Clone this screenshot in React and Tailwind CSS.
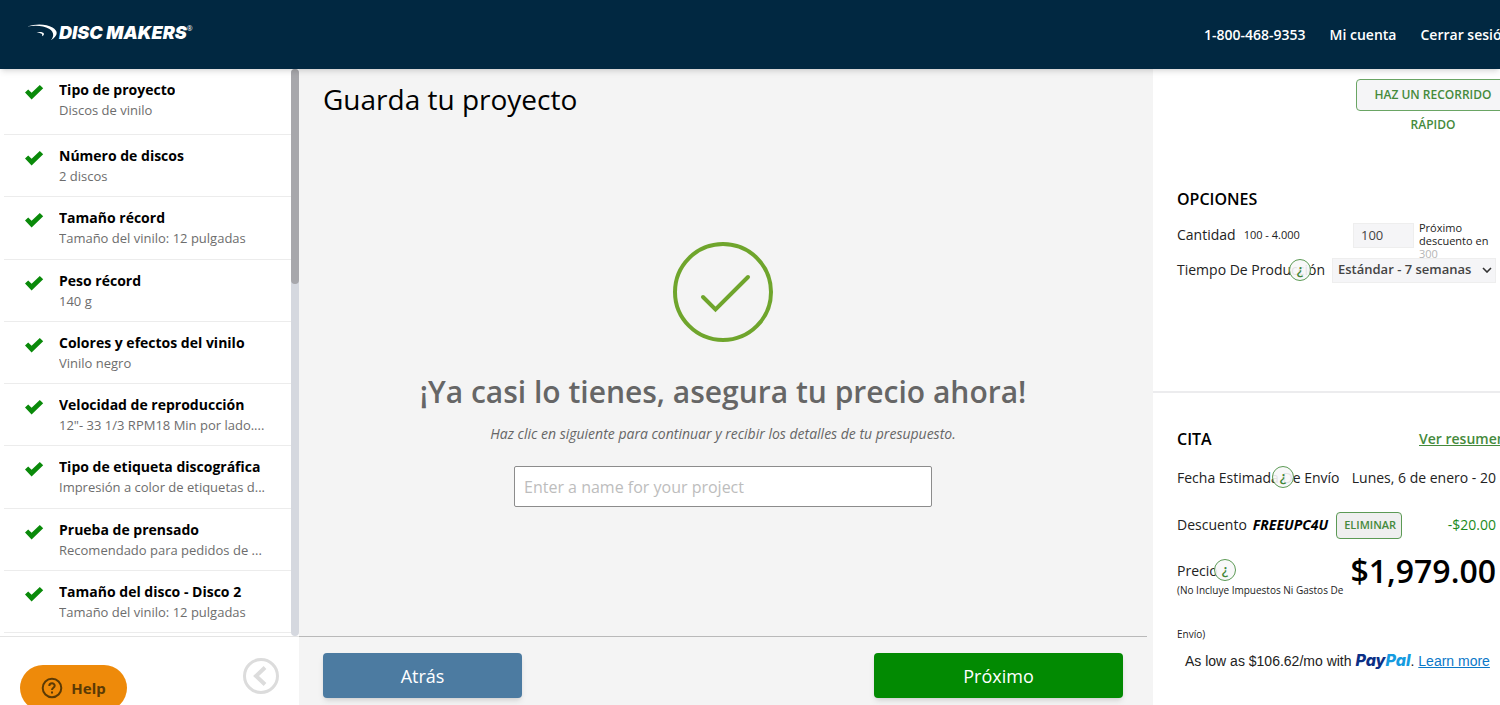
import React, { useState } from "react";

const steps = [
  { title: "Tipo de proyecto", detail: "Discos de vinilo" },
  { title: "Número de discos", detail: "2 discos" },
  { title: "Tamaño récord", detail: "Tamaño del vinilo: 12 pulgadas" },
  { title: "Peso récord", detail: "140 g" },
  { title: "Colores y efectos del vinilo", detail: "Vinilo negro" },
  { title: "Velocidad de reproducción", detail: '12"- 33 1/3 RPM18 Min por lado....' },
  { title: "Tipo de etiqueta discográfica", detail: "Impresión a color de etiquetas d..." },
  { title: "Prueba de prensado", detail: "Recomendado para pedidos de ..." },
  { title: "Tamaño del disco - Disco 2", detail: "Tamaño del vinilo: 12 pulgadas" },
];

const CheckIcon = () => (
  <svg viewBox="0 0 20 16" className="mt-1 h-4 w-5 shrink-0" aria-hidden="true">
    <path d="M1 8.6 L4.2 5.4 L7.6 8.8 L15.8 0.9 L19.2 4.3 L7.6 15.4 Z" fill="#0a8a0a" />
  </svg>
);

const Logo = () => (
  <a href="#" className="flex items-center pb-1 text-white">
    <svg viewBox="0 0 32 18" className="h-[18px] w-8" aria-hidden="true">
      <path
        d="M-1 2.8 C8 -0.6 19 -0.4 25.5 3.4 C31.5 7 31.2 11.8 23.8 16.2 C27.6 12 26.8 7.8 22 4.8 C16.6 1.6 8 1 -1 2.8 Z"
        fill="currentColor"
      />
      <path
        d="M9.5 8.4 C13 7.5 16 8 16.8 9.4 C17.2 10.4 16.6 11.4 15 12.2 C15.6 11 15.4 10.2 14.2 9.5 C13 8.8 11.6 8.5 9.5 8.4 Z"
        fill="currentColor"
      />
    </svg>
    <span className="font-['Inter'] text-[18px] leading-6 font-black italic">DISC MAKERS</span>
    <sup className="-top-1 text-[7px]">®</sup>
  </a>
);

// Round help marker that floats over the end of its label
const HelpMark = ({ className }) => (
  <button
    type="button"
    aria-label="Ayuda"
    className={`absolute flex h-[22px] w-[22px] items-center justify-center rounded-full border border-[#5c9a55] bg-[#f7f7f8]/90 text-sm leading-5 font-semibold text-[#3f8536] ${className}`}
  >
    ¿
  </button>
);

const Sidebar = () => (
  <aside className="flex w-[299px] shrink-0 flex-col bg-white">
    <div className="flex min-h-0 flex-1">
      <ul className="flex flex-1 flex-col overflow-hidden pb-[3px] pl-1">
        {steps.map((step) => (
          <li
            key={step.title}
            className="flex grow items-start gap-[15px] border-b border-[#ececec] pt-[11px] pl-5 first:pb-1"
          >
            <CheckIcon />
            <div className="min-w-0">
              <h3 className="truncate text-sm leading-5 font-bold text-black">{step.title}</h3>
              <p className="truncate text-[13px] leading-5 text-[#6d6d6d]">{step.detail}</p>
            </div>
          </li>
        ))}
      </ul>
      <div className="w-2 shrink-0 rounded-full bg-[#d5d8df]">
        <div className="h-[38%] rounded-full bg-[#a7a7ab]" />
      </div>
    </div>
    <div className="flex h-[69px] items-start justify-between border-t border-[#e4e4e4] pr-5 pl-5">
      <button
        type="button"
        className="mt-7 flex h-[46px] w-[107px] shrink-0 items-center justify-center gap-2 rounded-full bg-[#ee8a0a] font-['Noto_Sans'] text-[15px] font-bold text-[#5b3a05]"
      >
        <svg viewBox="0 0 22 22" className="h-[22px] w-[22px]" fill="none" stroke="currentColor" strokeWidth="2">
          <circle cx="11" cy="11" r="9.3" />
          <path d="M8.3 9 C8.3 5.4 13.8 5.6 13.7 8.8 C13.6 10.8 11 10.8 11 13" />
          <path d="M11 14.4 V16.4" />
        </svg>
        Help
      </button>
      <button type="button" aria-label="Contraer" className="mt-[21px]">
        <svg viewBox="0 0 36 36" className="h-9 w-9" fill="none" stroke="#dcdcdc">
          <circle cx="18" cy="18" r="16.5" strokeWidth="3" />
          <path d="M22 9.5 L13 18 L22 26.5" strokeWidth="4" />
        </svg>
      </button>
    </div>
  </aside>
);

const Main = ({ name, setName }) => (
  <main className="flex min-w-0 flex-1 flex-col bg-[#f4f4f4] pr-1.5">
    <h1 className="pt-3 pl-6 text-[28px] leading-9 text-black">Guarda tu proyecto</h1>
    <div className="flex flex-1 flex-col items-center justify-center pb-1">
      <svg viewBox="0 0 100 100" className="h-[100px] w-[100px]" fill="none" stroke="#6fa52c" strokeWidth="4">
        <circle cx="50" cy="50" r="48" />
        <path d="M30 55 L42.5 67.5 L75 35" strokeLinecap="round" />
      </svg>
      <h2 className="mt-7 text-center text-[30px] leading-[44px] font-semibold text-[#666]">
        ¡Ya casi lo tienes, asegura tu precio ahora!
      </h2>
      <p className="mt-2.5 text-center text-sm leading-5 text-[#666] italic">
        Haz clic en siguiente para continuar y recibir los detalles de tu presupuesto.
      </p>
      <input
        type="text"
        aria-label="Nombre del proyecto"
        placeholder="Enter a name for your project"
        value={name}
        onChange={(e) => setName(e.target.value)}
        className="mt-[22px] h-[41px] w-full max-w-[418px] rounded-xs border border-[#8c8c8c] bg-white px-[9px] text-base text-black placeholder-[#bdbdbd]"
      />
    </div>
    <div className="flex h-[69px] items-start justify-between border-t border-[#b9b9b9] pt-4 pr-6 pl-6">
      <button
        type="button"
        className="h-[45px] w-[199px] rounded-sm bg-[#4c7ba1] text-lg text-white shadow-md"
      >
        Atrás
      </button>
      <button
        type="button"
        className="h-[45px] w-[249px] rounded-sm bg-[#028a02] text-lg text-white shadow-md"
      >
        Próximo
      </button>
    </div>
  </main>
);

const Summary = ({ quantity, setQuantity }) => (
  <aside className="flex w-[347px] shrink-0 flex-col overflow-hidden bg-white pt-[10px] whitespace-nowrap text-[#222]">
    <section className="h-[314px] border-b-2 border-[#ececee] pl-6">
      <div className="flex h-[109px] justify-end">
        <button
          type="button"
          className="-mr-[10px] flex h-8 w-[154px] shrink-0 items-start justify-center rounded-sm border border-[#6aa564] bg-[#f5f5f7] px-3 text-center text-xs leading-[30px] font-semibold whitespace-normal text-[#458a3c]"
        >
          HAZ UN RECORRIDO RÁPIDO
        </button>
      </div>
      <h2 className="text-base leading-[22px] font-semibold text-black">OPCIONES</h2>
      <div className="mt-[7px] flex h-9 items-center">
        <label htmlFor="quantity" className="flex w-44 items-center gap-2 text-sm">
          Cantidad <span className="text-[11px]">100 - 4.000</span>
        </label>
        <input
          id="quantity"
          type="text"
          value={quantity}
          onChange={(e) => setQuantity(e.target.value)}
          className="h-[25px] w-[61px] border border-[#eee] bg-[#f5f5f7] px-[7px] text-[13px] text-[#444]"
        />
        <p className="h-7 pl-[5px] text-[11px] leading-[13px]">
          Próximo
          <br />
          descuento en
          <br />
          <span className="text-[#b5b5b5]">300</span>
        </p>
      </div>
      <div className="flex h-[34px] items-center">
        <label htmlFor="time" className="relative w-[155px] text-sm">
          Tiempo De Producción
          <HelpMark className="top-0 left-28 -mt-px" />
        </label>
        <select
          id="time"
          className="h-[25px] w-[164px] appearance-none border border-[#eee] bg-[#f5f5f7] pl-[5px] text-[13px] font-semibold text-[#444]"
        >
          <option>Estándar - 7 semanas</option>
        </select>
        <svg
          viewBox="0 0 10 6"
          className="pointer-events-none -ml-3.5 h-1.5 w-2.5"
          fill="none"
          stroke="#333"
          strokeWidth="1.6"
        >
          <path d="M1 1 L5 5 L9 1" />
        </svg>
      </div>
    </section>

    <section className="pt-[34px] pl-6">
      <div className="flex h-6 items-center">
        <h2 className="w-[242px] shrink-0 text-base leading-[22px] font-semibold text-black">CITA</h2>
        <a href="#" className="text-sm font-semibold text-[#458a3c] underline">
          Ver resumen
        </a>
      </div>
      <div className="flex h-[54px] items-center justify-between pr-1 text-sm">
        <span className="relative">
          Fecha Estimada De Envío
          <HelpMark className="top-0 left-[95px] -mt-0.5" />
        </span>
        <span>Lunes, 6 de enero - 20</span>
      </div>
      <div className="flex h-10 items-center pr-1 text-sm">
        <span>Descuento</span>
        <span className="ml-1.5 font-bold text-black italic">FREEUPC4U</span>
        <button
          type="button"
          className="ml-2 h-[27px] w-[66px] rounded-sm border border-[#5c9a55] bg-[#efefef] pl-0.5 text-[11px] font-semibold text-[#458a3c]"
        >
          ELIMINAR
        </button>
        <span className="ml-auto text-[#1c8a1c]">-$20.00</span>
      </div>
      <div className="mt-[7px] flex h-[38px] items-center justify-between pr-1">
        <span className="relative text-sm">
          Precio
          <HelpMark className="top-0 left-[37px] -mt-0.5" />
        </span>
        <span className="text-[32px] font-semibold text-black">$1,979.00</span>
      </div>
      <p className="-mt-[22px] w-44 text-[10px] leading-[44px] whitespace-normal">
        (No Incluye Impuestos Ni Gastos De Envío)
      </p>
      <p className="-mt-1.5 pl-2 font-['Liberation_Sans'] text-sm leading-[22px]">
        As low as $106.62/mo with{" "}
        <span className="font-['Inter'] text-base leading-4 font-extrabold text-[#0b2f86] italic">
          Pay<span className="text-[#159be0]">Pal</span>
        </span>
        .{" "}
        <a href="#" className="text-[#0a78c8] underline">
          Learn more
        </a>
      </p>
    </section>
  </aside>
);

const App = () => {
  const [name, setName] = useState("");
  const [quantity, setQuantity] = useState("100");

  return (
    <div className="flex h-screen flex-col overflow-hidden bg-white font-['Open_Sans',sans-serif]">
      <header className="relative z-10 flex h-[69px] shrink-0 items-center justify-between bg-[#012841] pl-[27px] shadow-md">
        <Logo />
        <nav className="flex w-[296px] gap-6 overflow-hidden text-sm font-semibold whitespace-nowrap text-white">
          <a href="#">1-800-468-9353</a>
          <a href="#">Mi cuenta</a>
          <a href="#">Cerrar sesión</a>
        </nav>
      </header>
      <div className="flex min-h-0 flex-1">
        <Sidebar />
        <Main name={name} setName={setName} />
        <Summary quantity={quantity} setQuantity={setQuantity} />
      </div>
    </div>
  );
};

export default App;
